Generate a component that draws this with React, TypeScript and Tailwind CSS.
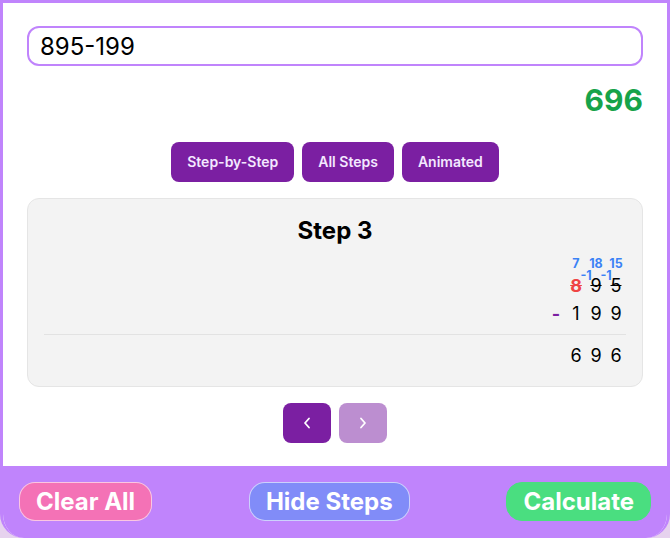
import React from "react";

export default function App() {
  return (
    <div className="w-[670px] h-[538px] bg-[#e6d2ee] font-['Inter','Noto_Sans',sans-serif]">
      <div className="flex h-full flex-col overflow-hidden rounded-b-3xl border-[3px] border-b-0 border-[#c084fc] bg-white">
        <div className="flex flex-1 flex-col px-6 pt-[23px]">
          <input
            defaultValue="895-199"
            className="h-10 w-full rounded-xl border-2 border-[#c084fc] px-[11px] text-2xl text-black outline-none"
          />
          <div className="mt-4 text-right text-3xl font-bold leading-9 text-[#16a34a]">696</div>
          <div className="mt-6 flex justify-center gap-2">
            <button className="h-10 rounded-lg bg-[#7b1fa2] px-4 text-sm font-semibold text-[#f3e8ff]">Step-by-Step</button>
            <button className="h-10 rounded-lg bg-[#7b1fa2] px-4 text-sm font-semibold text-[#f3e8ff]">All Steps</button>
            <button className="h-10 rounded-lg bg-[#7b1fa2] px-4 text-sm font-semibold text-[#f3e8ff]">Animated</button>
          </div>
          <div className="mt-4 rounded-xl border border-[#e5e5e5] bg-[#f3f3f3] p-4">
            <div className="text-center text-2xl font-bold leading-8 text-black">Step 3</div>
            <div className="mt-[9px] flex flex-col items-end">
              <div className="flex text-[12.5px] font-bold leading-4 text-[#3b82f6]">
                <span className="w-5 text-center">7</span>
                <span className="w-5 text-center">18</span>
                <span className="w-5 text-center">15</span>
              </div>
              <div className="flex text-lg leading-7 text-black">
                <span className="relative w-5 text-center font-bold text-[#ef4444] line-through decoration-[#ef4444]">
                  8
                  <span className="absolute left-full top-[-4px] -translate-x-1/2 text-[12.5px] font-bold leading-4 text-[#3b82f6] no-underline">-1</span>
                </span>
                <span className="relative w-5 text-center line-through">
                  9
                  <span className="absolute left-full top-[-4px] -translate-x-1/2 text-[12.5px] font-bold leading-4 text-[#3b82f6] no-underline">-1</span>
                </span>
                <span className="w-5 text-center line-through">5</span>
              </div>
              <div className="flex text-lg leading-7 text-black">
                <span className="w-5 text-center font-bold text-[#7b1fa2]">-</span>
                <span className="w-5 text-center">1</span>
                <span className="w-5 text-center">9</span>
                <span className="w-5 text-center">9</span>
              </div>
            </div>
            <div className="mt-[6px] border-t border-[#e2e2e2]" />
            <div className="mt-[7px] flex justify-end text-lg leading-7 text-black">
              <span className="w-5 text-center">6</span>
              <span className="w-5 text-center">9</span>
              <span className="w-5 text-center">6</span>
            </div>
          </div>
          <div className="mt-4 flex justify-center gap-2">
            <button className="flex h-10 w-12 items-center justify-center rounded-lg bg-[#7b1fa2]">
              <svg width="8" height="12" viewBox="0 0 8 12" fill="none" stroke="white" strokeWidth="1.8" strokeLinecap="round" strokeLinejoin="round">
                <polyline points="6,1.5 2,6 6,10.5" />
              </svg>
            </button>
            <button className="flex h-10 w-12 items-center justify-center rounded-lg bg-[#7b1fa2] opacity-50">
              <svg width="8" height="12" viewBox="0 0 8 12" fill="none" stroke="white" strokeWidth="1.8" strokeLinecap="round" strokeLinejoin="round">
                <polyline points="2,1.5 6,6 2,10.5" />
              </svg>
            </button>
          </div>
        </div>
        <div className="flex h-[72px] items-center justify-between bg-[#c084fc] px-4 pb-px">
          <button className="h-[39px] rounded-2xl border border-white/60 bg-[#f472b6] px-4 text-2xl font-bold text-white">Clear All</button>
          <button className="h-[39px] rounded-2xl border border-white/60 bg-[#818cf8] px-4 text-2xl font-bold text-white">Hide Steps</button>
          <button className="h-[39px] rounded-2xl border border-[#4ade80] bg-[#4ade80] px-4 text-2xl font-bold text-white">Calculate</button>
        </div>
      </div>
    </div>
  );
}
